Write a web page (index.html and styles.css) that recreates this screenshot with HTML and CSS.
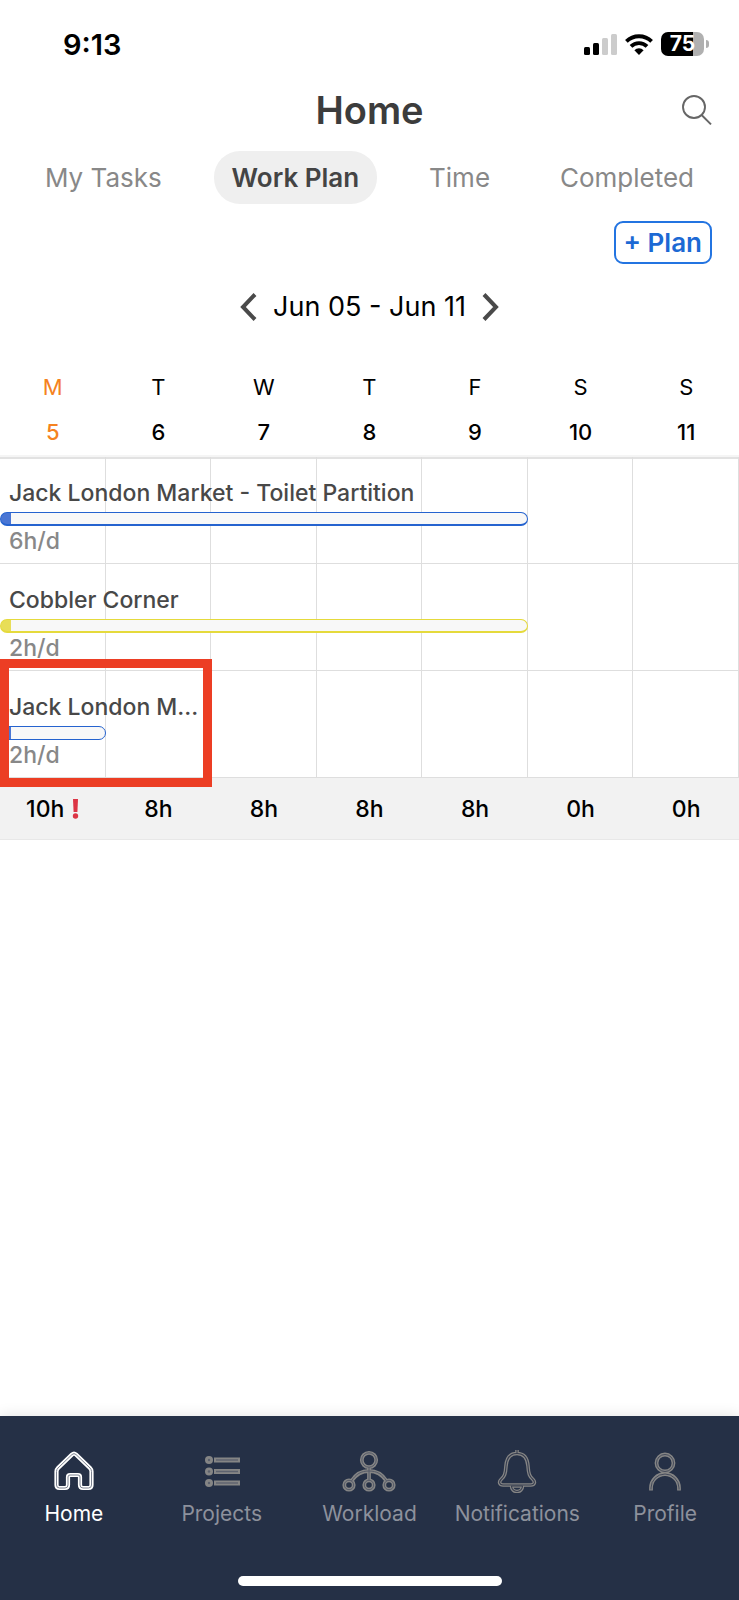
FILE: index.html
```html
<!DOCTYPE html>
<html lang="en">
<head>
  <meta charset="UTF-8" />
  <meta name="viewport" content="width=device-width, initial-scale=1.0"/>
  <title>Home</title>
  <link rel="stylesheet" href="styles.css">
</head>
<body>
  <!-- status bar -->
  <div class="status-bar">
    <span class="clock">9:13</span>
    <div class="status-icons">
      <svg class="signal" width="33" height="21" viewBox="0 0 33 21">
        <rect x="0" y="13" width="6" height="8" rx="1.5" fill="#000"/>
        <rect x="9" y="9" width="6" height="12" rx="1.5" fill="#000"/>
        <rect x="18" y="4" width="6" height="17" rx="1.5" fill="#ccc"/>
        <rect x="27" y="0" width="6" height="21" rx="1.5" fill="#ccc"/>
      </svg>
      <svg class="wifi" width="28" height="21" viewBox="0 0 28 21">
        <g fill="none" stroke="#000" stroke-width="3.8">
          <path d="M1.4 7.4a18 18 0 0 1 25.2 0"/>
          <path d="M6 12.4a11.4 11.4 0 0 1 16 0"/>
        </g>
        <path d="M14 21l-4.6-4.8a6.6 6.6 0 0 1 9.2 0z" fill="#000"/>
      </svg>
      <div class="battery"><span>75</span></div>
    </div>
  </div>

  <header class="header">
    <h1>Home</h1>
    <button class="search-btn" aria-label="Search">
      <svg width="30" height="30" viewBox="0 0 30 30" fill="none" stroke="#666" stroke-width="1.9">
        <circle cx="12" cy="12" r="11"/>
        <path d="M19.6 20L29 29.4"/>
      </svg>
    </button>
  </header>

  <nav class="tabs">
    <a href="#">My Tasks</a>
    <a href="#" class="active">Work Plan</a>
    <a href="#">Time</a>
    <a href="#">Completed</a>
  </nav>

  <main>
    <div class="actions">
      <button class="plan-btn">+ Plan</button>
    </div>

    <div class="week">
      <button aria-label="Previous week">
        <svg width="17" height="28" viewBox="0 0 17 28" fill="none" stroke="#4a4a4a" stroke-width="4">
          <path d="M15 1.5L3 14l12 12.5"/>
        </svg>
      </button>
      <span>Jun 05 - Jun 11</span>
      <button aria-label="Next week">
        <svg width="17" height="28" viewBox="0 0 17 28" fill="none" stroke="#4a4a4a" stroke-width="4">
          <path d="M2 1.5L14 14 2 26.5"/>
        </svg>
      </button>
    </div>

    <table class="plan">
      <thead>
        <tr>
          <th class="today">M<span>5</span></th>
          <th>T<span>6</span></th>
          <th>W<span>7</span></th>
          <th>T<span>8</span></th>
          <th>F<span>9</span></th>
          <th>S<span>10</span></th>
          <th>S<span>11</span></th>
        </tr>
      </thead>
      <tbody>
        <tr>
          <td>
            <div class="task five-days">
              <p class="name">Jack London Market - Toilet Partition</p>
              <div class="bar"></div>
              <p class="rate">6h/d</p>
            </div>
          </td>
          <td></td><td></td><td></td><td></td><td></td><td></td>
        </tr>
        <tr>
          <td>
            <div class="task five-days yellow">
              <p class="name">Cobbler Corner</p>
              <div class="bar"></div>
              <p class="rate">2h/d</p>
            </div>
          </td>
          <td></td><td></td><td></td><td></td><td></td><td></td>
        </tr>
        <tr>
          <td>
            <div class="task one-day">
              <p class="name">Jack London M...</p>
              <div class="bar"></div>
              <p class="rate">2h/d</p>
            </div>
            <div class="highlight"></div>
          </td>
          <td></td><td></td><td></td><td></td><td></td><td></td>
        </tr>
      </tbody>
      <tfoot>
        <tr>
          <td>10h
            <svg class="alert" width="7" height="20" viewBox="0 0 7 20" fill="#dc3545">
              <path d="M1 0h5l-.6 13H1.6z"/>
              <circle cx="3.5" cy="17" r="2.7"/>
            </svg>
          </td>
          <td>8h</td>
          <td>8h</td>
          <td>8h</td>
          <td>8h</td>
          <td>0h</td>
          <td>0h</td>
        </tr>
      </tfoot>
    </table>
  </main>

  <!-- bottom navigation -->
  <footer class="bottom">
    <nav class="bottom-nav">
      <a href="#" class="active">
        <svg width="54" height="44" viewBox="0 0 54 44" fill="none" stroke-linejoin="round">
          <path d="M25 5.5a3 3 0 0 1 4 0L43 19q1.5 1.5 1.5 3.5V36q0 3-3 3H36q-3 0-3-3V28q0-2-2-2h-8q-2 0-2 2v8q0 3-3 3h-5.5q-3 0-3-3V22.5q0-2 1.5-3.5z" stroke="#fff" stroke-width="4.2"/>
          <path d="M25 5.5a3 3 0 0 1 4 0L43 19q1.5 1.5 1.5 3.5V36q0 3-3 3H36q-3 0-3-3V28q0-2-2-2h-8q-2 0-2 2v8q0 3-3 3h-5.5q-3 0-3-3V22.5q0-2 1.5-3.5z" stroke="#7c8290" stroke-width="1"/>
        </svg>
        Home
      </a>
      <a href="#">
        <svg width="54" height="44" viewBox="0 0 54 44">
          <g fill="#858585">
            <circle cx="14" cy="11" r="4"/><rect x="19" y="8.5" width="26" height="5"/>
            <circle cx="14" cy="22.5" r="4"/><rect x="19" y="20" width="26" height="5"/>
            <circle cx="14" cy="34" r="4"/><rect x="19" y="31.5" width="26" height="5"/>
          </g>
          <g fill="#5d626e">
            <circle cx="14" cy="11" r="1.2"/><rect x="21" y="10.3" width="22" height="1.4"/>
            <circle cx="14" cy="22.5" r="1.2"/><rect x="21" y="21.8" width="22" height="1.4"/>
            <circle cx="14" cy="34" r="1.2"/><rect x="21" y="33.3" width="22" height="1.4"/>
          </g>
        </svg>
        Projects
      </a>
      <a href="#">
        <svg width="54" height="44" viewBox="0 0 54 44" fill="none">
          <g stroke="#858585" stroke-width="3.8">
            <circle cx="27" cy="11" r="7.2"/>
            <circle cx="7" cy="36" r="4.7"/>
            <circle cx="27" cy="36" r="4.7"/>
            <circle cx="47" cy="36" r="4.7"/>
            <path d="M27 18v13M9.5 32Q16 22 27 22T44.5 32"/>
          </g>
          <g stroke="#555a68" stroke-width="1">
            <circle cx="27" cy="11" r="7.2"/>
            <circle cx="7" cy="36" r="4.7"/>
            <circle cx="27" cy="36" r="4.7"/>
            <circle cx="47" cy="36" r="4.7"/>
            <path d="M27 18v13M9.5 32C14 25 19 22 27 22s13 3 17.500 10"/>
          </g>
        </svg>
        Workload
      </a>
      <a href="#">
        <svg width="54" height="44" viewBox="0 0 54 44" fill="none" stroke-linejoin="round">
          <g stroke="#858585" stroke-width="3.6">
            <path d="M27 1v3M27 4.5c-8 0-10.5 6-11 12.5-.5 8-1.500 10.500-5 13.500-2.500 2.500-1.500 5.500 2 5.500h28c3.500 0 4.500-3 2-5.500-3.500-3-4.500-5.500-5-13.500-.5-6.500-3-12.500-11-12.500z"/>
            <path d="M21.500 37a5.500 5.500 0 0 0 11 0z"/>
          </g>
          <g stroke="#353c4e" stroke-width="1.100">
            <path d="M27 1v3M27 4.5c-8 0-10.5 6-11 12.5-.5 8-1.500 10.500-5 13.500-2.500 2.500-1.500 5.500 2 5.500h28c3.500 0 4.500-3 2-5.500-3.500-3-4.500-5.500-5-13.500-.5-6.500-3-12.500-11-12.500z"/>
            <path d="M21.500 37a5.500 5.500 0 0 0 11 0z"/>
          </g>
        </svg>
        Notifications
      </a>
      <a href="#">
        <svg width="54" height="44" viewBox="0 0 54 44" fill="none">
          <g stroke="#858585" stroke-width="3.8">
            <circle cx="27" cy="14" r="8.5"/>
            <path d="M13 41.5V39a14 14 0 0 1 28 0v2.5"/>
          </g>
          <g stroke="#454b5b" stroke-width="1">
            <circle cx="27" cy="14" r="8.5"/>
            <path d="M13 40.5V39a14 14 0 0 1 28 0v1.5"/>
          </g>
        </svg>
        Profile
      </a>
    </nav>
    <div class="home-indicator"></div>
  </footer>
</body>
</html>
```

FILE: styles.css
```css
* {
  margin: 0;
  padding: 0;
  box-sizing: border-box;
}

body {
  display: flex;
  flex-direction: column;
  min-height: 100vh;
  background: #fff;
  color: #000;
  font-family: Inter, "Liberation Sans", sans-serif;
  font-size: 23px;
}

button {
  background: none;
  border: none;
  font-family: inherit;
  cursor: pointer;
}

a {
  color: inherit;
  text-decoration: none;
}

svg {
  display: block;
}

/* status bar */
.status-bar {
  display: flex;
  justify-content: space-between;
  align-items: center;
  height: 88px;
  padding: 0 30px 0 63px;
}

.clock {
  font-size: 29px;
  font-weight: 600;
}

.status-icons {
  display: flex;
  align-items: center;
  gap: 8px;
}

.battery {
  position: relative;
  width: 43px;
  height: 24px;
  margin-right: 5px;
  border-radius: 7px;
  background: linear-gradient(to right, #000 75%, #b0b0b0 75%);
  color: #fff;
  font-size: 21px;
  font-weight: 700;
  line-height: 24px;
  text-align: center;
}

.battery::after {
  content: "";
  position: absolute;
  top: 8px;
  right: -5px;
  width: 3px;
  height: 8px;
  border-radius: 0 3px 3px 0;
  background: #b0b0b0;
}

/* title */
.header {
  display: grid;
  grid-template-columns: 1fr auto 1fr;
  align-items: center;
  height: 44px;
  padding: 0 27px;
}

.header h1 {
  grid-column: 2;
  color: #3c3c3c;
  font-size: 38px;
  font-weight: 600;
  line-height: 44px;
}

.search-btn {
  justify-self: end;
}

/* tabs */
.tabs {
  display: flex;
  justify-content: space-between;
  margin-top: 19px;
  padding: 0 27px;
}

.tabs a {
  padding: 0 18px;
  border-radius: 26px;
  color: #888;
  font-size: 26px;
  line-height: 53px;
}

.tabs .active {
  background: #efefef;
  color: #444;
  font-weight: 600;
}

/* week picker */
.actions {
  display: flex;
  justify-content: flex-end;
  padding: 17px 27px 0;
}

.plan-btn {
  padding: 0 8px;
  border: 2px solid #2374e1;
  border-radius: 9px;
  color: #1c69d4;
  font-size: 26px;
  font-weight: 600;
  line-height: 39px;
}

.week {
  display: flex;
  justify-content: center;
  align-items: center;
  gap: 16px;
  margin: 23px 0 27px;
  font-size: 27px;
  line-height: 40px;
}

/* plan table */
.plan {
  width: 100%;
  table-layout: fixed;
  border-collapse: separate;
  border-spacing: 0;
}

.plan th {
  padding: 17px 0 7px;
  border-bottom: 2px solid #f5f5f5;
  font-size: 22px;
  font-weight: 400;
  line-height: 32px;
}

.plan th span {
  display: block;
  margin-top: 13px;
  font-weight: 500;
}

.plan .today {
  color: #f58220;
}

.plan tbody td {
  position: relative;
  height: 107px;
  box-shadow: inset -1px -1px #dedede;
  vertical-align: top;
}

.plan tbody tr:first-child td {
  box-shadow: inset -1px -1px #dedede, inset 0 2px #e2e2e2;
}

.task {
  position: relative;
  z-index: 1;
  padding-top: 22px;
  font-weight: 500;
  line-height: 28px;
  white-space: nowrap;
}

.five-days {
  width: 500%;
}

.task p {
  padding-left: 9px;
}

.name {
  color: #484848;
}

.rate {
  margin-top: 1px;
  color: #888;
}

.bar {
  height: 14px;
  margin-top: 5px;
  border: 1px solid #2563cf;
  border-radius: 7px;
  background: linear-gradient(to right, #4a76d4 10px, #f8f8f8 10px);
}

.five-days .bar {
  border-bottom-width: 2px;
}

.yellow .bar {
  border-color: #e5da3c;
  background: linear-gradient(to right, #e8de58 10px, #f8f8f8 10px);
}

.highlight {
  position: absolute;
  top: -12px;
  left: 0;
  z-index: 2;
  width: 201%;
  height: 128px;
  border: 9px solid #ec3e24;
}

.plan tfoot td {
  height: 62px;
  border-bottom: 1px solid #e8e8e8;
  background: #f2f2f2;
  font-weight: 500;
  text-align: center;
}

.alert {
  display: inline-block;
  margin-left: 2px;
  vertical-align: -2px;
}

/* bottom navigation */
.bottom {
  margin-top: auto;
  padding: 33px 0 14px;
  background: #253046;
  box-shadow: 0 0 14px rgba(0, 0, 0, 0.12);
}

.bottom-nav {
  display: grid;
  grid-template-columns: repeat(5, 1fr);
}

.bottom-nav a {
  display: flex;
  flex-direction: column;
  align-items: center;
  gap: 7px;
  color: #8d919c;
  font-size: 21px;
  line-height: 28px;
}

.bottom-nav .active {
  color: #fff;
}

.home-indicator {
  width: 264px;
  max-width: 60%;
  height: 10px;
  margin: 48px auto 0;
  border-radius: 5px;
  background: #fff;
}
```
